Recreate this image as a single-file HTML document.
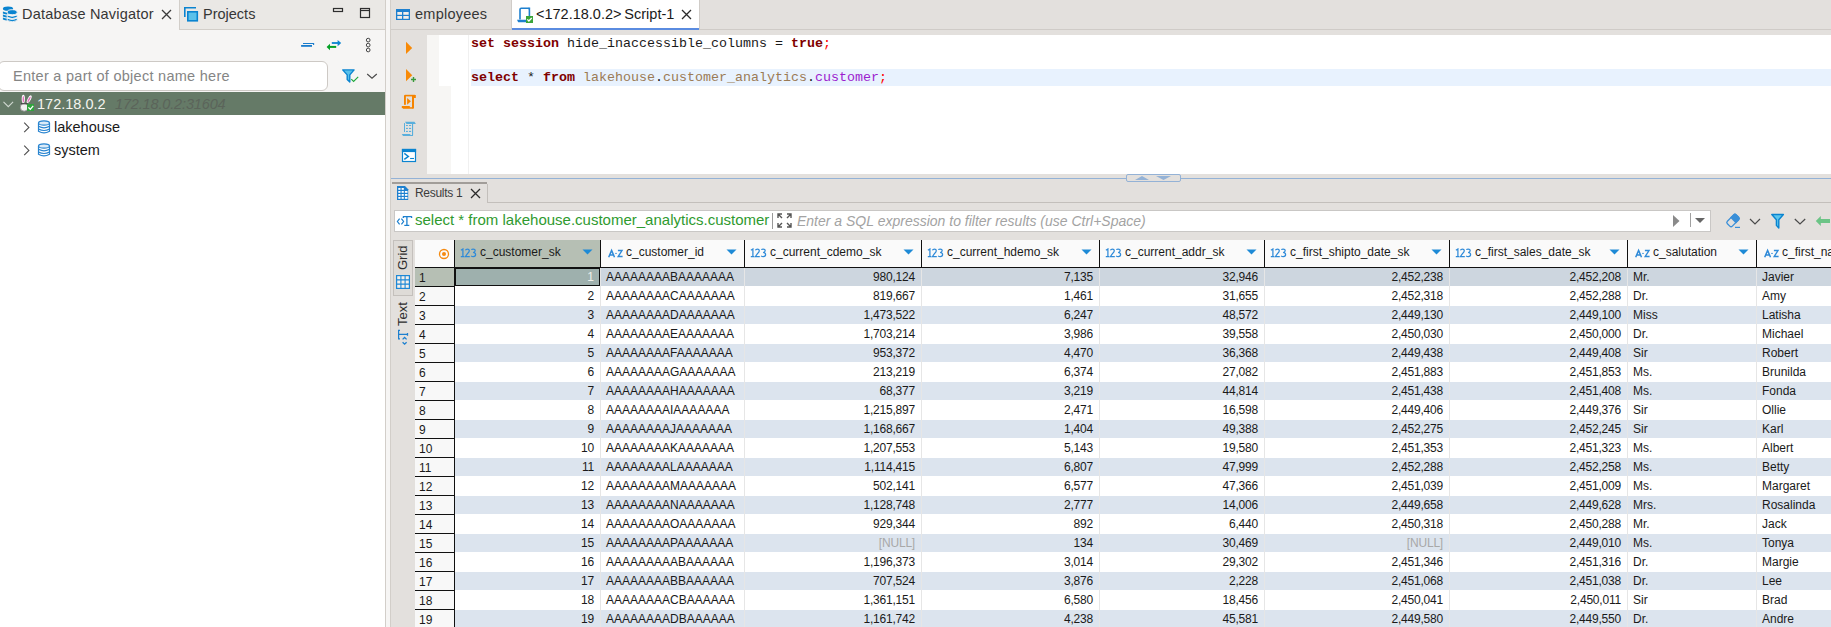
<!DOCTYPE html>
<html><head><meta charset="utf-8"><style>
html,body{margin:0;padding:0;width:1831px;height:627px;overflow:hidden;background:#e3e0dd}
body{position:relative;font-family:"Liberation Sans",sans-serif}
body>div,body>svg{position:absolute}
.t{white-space:pre;line-height:1}
</style></head><body>
<div style="left:0px;top:0px;width:385px;height:627px;background:#ffffff;"></div>
<div style="left:0px;top:0px;width:385px;height:92px;background:#f6f5f4;"></div>
<div style="left:179px;top:0px;width:206px;height:29px;background:#eae8e5;border-left:1px solid #d2cec9;border-bottom:1px solid #d2cec9;box-sizing:border-box;height:30px;width:206px"></div>
<svg style="left:0px;top:0px" width="20" height="24" viewBox="0 0 20 24"><g fill="#0a84d0">
<ellipse cx="8" cy="8.7" rx="5.1" ry="2.1"/>
<path d="M2.9 11.6 q2 1 4.5 1.2 v1.8 q-2.5 -0.2 -4.5 -1.2z"/>
<path d="M2.9 14.6 q2 1 4.5 1.2 v1.8 q-2.5 -0.2 -4.5 -1.2z"/>
<path d="M2.9 17.6 q2 1 4.5 1.2 v1.8 q-2.5 -0.2 -4.5 -1.2z"/>
</g>
<g fill="#0a84d0" stroke="#f6f5f4" stroke-width="0.9">
<ellipse cx="12.2" cy="12.2" rx="5" ry="2.5"/>
<path d="M7.2 15 q5 2.6 10 0 v2.3 q-5 2.6 -10 0z"/>
<path d="M7.2 18.2 q5 2.6 10 0 v2.3 q-5 2.6 -10 0z"/>
</g></svg>
<div class="t" style="left:22px;top:7px;font-size:14.5px;color:#363636;letter-spacing:0.2px">Database Navigator</div>
<svg style="left:161px;top:9px" width="11" height="11" viewBox="0 0 11 11"><path d="M1 1L10 10M10 1L1 10" stroke="#3a3a3a" stroke-width="1.3"/></svg>
<svg style="left:183px;top:5px" width="16" height="17" viewBox="0 0 16 17"><path d="M1.8 12V2.8H13" stroke="#0a84d0" stroke-width="1.6" fill="none"/><rect x="4.8" y="6.8" width="9.5" height="9" fill="#5bc1ea" stroke="#0a84d0" stroke-width="1.6"/></svg>
<div class="t" style="left:203px;top:7px;font-size:14.5px;color:#363636;">Projects</div>
<svg style="left:332px;top:7px" width="13" height="6" viewBox="0 0 13 6"><rect x="1.5" y="1.5" width="9" height="3" fill="none" stroke="#2e2e2e" stroke-width="1.2"/></svg>
<svg style="left:359px;top:7px" width="13" height="13" viewBox="0 0 13 13"><rect x="1.5" y="1.5" width="9" height="9" fill="none" stroke="#2e2e2e" stroke-width="1.2"/><path d="M1.5 3.5h9" stroke="#2e2e2e" stroke-width="1.2"/></svg>
<svg style="left:296px;top:34px" width="50" height="22" viewBox="0 0 50 22"><path d="M7 9.5H17.6V11" stroke="#1a7ccc" stroke-width="1.1" fill="none"/><rect x="5.1" y="11" width="10.9" height="1.8" fill="#1a7ccc"/><path d="M35.8 9H42.5" stroke="#0a84d0" stroke-width="1.8"/><path d="M41.6 5.9L45.2 9L41.6 12.2z" fill="#0a84d0"/><path d="M40.2 12.9H33" stroke="#03a025" stroke-width="2"/><path d="M34 9.7L30.6 12.9L34 16.2z" fill="#03a025"/></svg>
<svg style="left:364px;top:37px" width="9" height="17" viewBox="0 0 9 17"><g fill="none" stroke="#444" stroke-width="1"><circle cx="4.2" cy="3.1" r="1.85"/><circle cx="4.2" cy="8.1" r="1.85"/><circle cx="4.2" cy="13" r="1.85"/></g></svg>
<div style="left:-2px;top:61px;width:330px;height:30px;background:#fff;border:1px solid #cdc9c5;border-radius:6px;box-sizing:border-box"></div>
<div class="t" style="left:13px;top:69px;font-size:14.5px;color:#858585;letter-spacing:0.28px">Enter a part of object name here</div>
<svg style="left:341px;top:69px" width="19" height="15" viewBox="0 0 19 15"><path d="M1.7 0.9h11.4l-4.3 5v7.2l-2.6-2.6v-4.6z" fill="#58c0ea" stroke="#0a84d0" stroke-width="1.4" stroke-linejoin="round"/><path d="M10.3 10.2l2.3 2.3 4.6-4.6" stroke="#1ea83a" stroke-width="1.1" fill="none"/></svg>
<svg style="left:366px;top:72px" width="12" height="8" viewBox="0 0 12 8"><path d="M1.2 2l4.8 4.3 4.8-4.3" stroke="#4a4a4a" stroke-width="1.15" fill="none"/></svg>
<div style="left:0px;top:92px;width:385px;height:23px;background:#657a67;"></div>
<svg style="left:2px;top:100px" width="13" height="9" viewBox="0 0 13 9"><path d="M1.5 1.8l4.8 4.8 4.8-4.8" stroke="#d0d8d0" stroke-width="1.1" fill="none"/></svg>
<svg style="left:19px;top:94px" width="17" height="18" viewBox="0 0 17 18"><ellipse cx="4.3" cy="5" rx="1.6" ry="4.2" fill="#fff"/><ellipse cx="4.3" cy="5.3" rx="0.75" ry="3.2" fill="#e46bbd"/>
<g transform="rotate(28 10.2 5.2)"><ellipse cx="10.2" cy="5.2" rx="1.6" ry="4.2" fill="#fff"/><ellipse cx="10.2" cy="5.5" rx="0.75" ry="3.2" fill="#e46bbd"/></g>
<ellipse cx="5.2" cy="13.2" rx="3.9" ry="4" fill="#f2f2f2" stroke="#8a8a8a" stroke-width="0.8"/><path d="M2 9.8h6.5" stroke="#333" stroke-width="1"/><rect x="8" y="10" width="7" height="7" fill="#2fa33c"/><path d="M9.4 13.4l1.9 1.9 2.9-3.4" stroke="#fff" stroke-width="1.3" fill="none"/></svg>
<div class="t" style="left:37px;top:97px;font-size:14.5px;color:#f4f4ee;">172.18.0.2</div>
<div class="t" style="left:115px;top:97px;font-size:14.5px;color:#5b645a;font-style:italic;letter-spacing:-0.15px">172.18.0.2:31604</div>
<svg style="left:22px;top:121px" width="9" height="12" viewBox="0 0 9 12"><path d="M2.2 1.6l4.7 4.8-4.7 4.8" stroke="#505050" stroke-width="1.1" fill="none"/></svg>
<svg style="left:37px;top:120px" width="14" height="14" viewBox="0 0 14 14"><ellipse cx="7" cy="3" rx="5.5" ry="2.2" fill="#dcebf7"/><g fill="none" stroke="#2a85d0" stroke-width="1.2"><ellipse cx="7" cy="3" rx="5.5" ry="2.2"/><path d="M1.5 3v8.3q5.5 3.2 11 0v-8.3"/><path d="M1.5 6.3q5.5 3 11 0M1.5 9q5.5 3 11 0"/></g></svg>
<div class="t" style="left:54px;top:120px;font-size:14.5px;color:#1a1a1a;">lakehouse</div>
<svg style="left:22px;top:144px" width="9" height="12" viewBox="0 0 9 12"><path d="M2.2 1.6l4.7 4.8-4.7 4.8" stroke="#505050" stroke-width="1.1" fill="none"/></svg>
<svg style="left:37px;top:143px" width="14" height="14" viewBox="0 0 14 14"><ellipse cx="7" cy="3" rx="5.5" ry="2.2" fill="#dcebf7"/><g fill="none" stroke="#2a85d0" stroke-width="1.2"><ellipse cx="7" cy="3" rx="5.5" ry="2.2"/><path d="M1.5 3v8.3q5.5 3.2 11 0v-8.3"/><path d="M1.5 6.3q5.5 3 11 0M1.5 9q5.5 3 11 0"/></g></svg>
<div class="t" style="left:54px;top:143px;font-size:14.5px;color:#1a1a1a;">system</div>
<div style="left:385px;top:0px;width:1px;height:627px;background:#d2cec9;"></div>
<div style="left:386px;top:0px;width:4px;height:627px;background:#f6f5f4;"></div>
<div style="left:390px;top:0px;width:1px;height:627px;background:#d2cec9;"></div>
<div style="left:391px;top:0px;width:1440px;height:627px;background:#e3e0dd;"></div>
<div style="left:391px;top:29px;width:1440px;height:1px;background:#cfcbc7;"></div>
<svg style="left:395px;top:8px" width="16" height="13" viewBox="0 0 16 13"><rect x="1" y="1" width="14" height="11" fill="#1e80cf"/><g fill="#f4eee8"><rect x="2.3" y="4" width="4.7" height="2.8"/><rect x="8.3" y="4" width="5.4" height="2.8"/><rect x="2.3" y="8" width="4.7" height="2.8"/><rect x="8.3" y="8" width="5.4" height="2.8"/></g></svg>
<div class="t" style="left:415px;top:7px;font-size:14.5px;color:#363636;letter-spacing:0.25px">employees</div>
<div style="left:511px;top:0px;width:1px;height:30px;background:#d0ccc8;"></div>
<div style="left:512px;top:0px;width:187px;height:28px;background:#ffffff;"></div>
<div style="left:512px;top:28px;width:187px;height:2px;background:#5a8be0;"></div>
<div style="left:699px;top:0px;width:1px;height:29px;background:#d0ccc8;"></div>
<svg style="left:516px;top:7px" width="19" height="17" viewBox="0 0 19 17"><path d="M4 12.5V2.5q0-1.2 1.2-1.2h7q1.2 0 1.2 1.2V12" fill="none" stroke="#1e80cf" stroke-width="1.6"/><path d="M12.4 1.3h1.8" stroke="#1e80cf" stroke-width="1.6"/><path d="M1 12.8h11v2.4H2.2z" fill="#1e80cf"/><rect x="10" y="9" width="7" height="7" fill="#3aa53a"/><path d="M11.3 12.4l1.6 1.6 2.8-3" stroke="#fff" stroke-width="1.3" fill="none"/></svg>
<div class="t" style="left:536px;top:7px;font-size:14.5px;color:#1a1a1a;">&lt;172.18.0.2&gt;&#8201;Script-1</div>
<svg style="left:681px;top:9px" width="11" height="11" viewBox="0 0 11 11"><path d="M1 1L10 10M10 1L1 10" stroke="#2a2a2a" stroke-width="1.3"/></svg>
<div style="left:427px;top:35px;width:1404px;height:139px;background:#ffffff;"></div>
<div style="left:427px;top:35px;width:12px;height:51px;background:#f7f6f4;"></div>
<div style="left:427px;top:86px;width:24px;height:88px;background:#f7f6f4;"></div>
<div style="left:468px;top:35px;width:1px;height:139px;background:#f0f0f0;"></div>
<div style="left:471px;top:69px;width:1360px;height:17px;background:#e8f2fe;"></div>
<svg style="left:404px;top:41px" width="10" height="14" viewBox="0 0 10 14"><path d="M2 0.8L8.2 7L2 13.1z" fill="#f88a07"/></svg>
<svg style="left:404px;top:68px" width="14" height="15" viewBox="0 0 14 15"><path d="M2 1L8.2 7.2L2 13.3z" fill="#f88a07"/><path d="M7 11.5h5M9.5 9v5" stroke="#3a9a3a" stroke-width="1.4"/></svg>
<svg style="left:398px;top:92px" width="22" height="20" viewBox="0 0 22 20"><g fill="#f58400"><rect x="6" y="3.2" width="1.9" height="9.6"/><rect x="6.8" y="2.8" width="10.3" height="1.6"/><rect x="15.8" y="3" width="2" height="3"/><rect x="14" y="3.8" width="2" height="12.5"/><rect x="3.8" y="14" width="8" height="2.2"/><rect x="5" y="15.2" width="10.5" height="1.5"/><path d="M9.1 5.9L12.9 9.3L9.1 12.8z"/></g></svg>
<svg style="left:398px;top:118px" width="22" height="20" viewBox="0 0 22 20"><g fill="#5aafdc"><rect x="6" y="5.1" width="1" height="8.9"/><path d="M7 3.8h9.5l1.4 2.1H8.5z"/><rect x="14" y="4.8" width="1.1" height="12.4"/><path d="M3.8 16h8l1 1h2.2v0.9H5z"/><rect x="8" y="7" width="1.9" height="1"/><rect x="11" y="7" width="2.1" height="1"/><rect x="8" y="9.9" width="1.9" height="1.1"/><rect x="11" y="9.9" width="2.1" height="1.1"/><rect x="8" y="12.9" width="1.9" height="1.1"/><rect x="11" y="12.9" width="2.1" height="1.1"/></g></svg>
<svg style="left:398px;top:144px" width="22" height="22" viewBox="0 0 22 22"><rect x="4.5" y="5.5" width="13" height="12" fill="#fff" stroke="#0b84d0" stroke-width="1.2"/><rect x="3.9" y="4.9" width="14.2" height="3.2" fill="#0b84d0"/><path d="M6.3 9.4l4.1 3-4.1 3" stroke="#0b84d0" stroke-width="1.4" fill="none"/><path d="M12.1 14.5h3.9" stroke="#0b84d0" stroke-width="1.1"/></svg>
<div class="t" style="left:471px;top:37px;font-size:13.33px;color:#1a1a1a;font-family:'Liberation Mono'"><span style="color:#7f0000;font-weight:bold">set</span> <span style="color:#7f0000;font-weight:bold">session</span> hide_inaccessible_columns = <span style="color:#7f0000;font-weight:bold">true</span><span style="color:#f00">;</span></div>
<div class="t" style="left:471px;top:71px;font-size:13.33px;color:#1a1a1a;font-family:'Liberation Mono'"><span style="color:#7f0000;font-weight:bold">select</span> * <span style="color:#7f0000;font-weight:bold">from</span> <span style="color:#9b7b55">lakehouse</span>.<span style="color:#9b7b55">customer_analytics</span>.<span style="color:#9c1ecf">customer</span><span style="color:#f00">;</span></div>
<div style="left:391px;top:178px;width:1440px;height:1px;background:#94b2d6;"></div>
<div style="left:1126px;top:174px;width:55px;height:8px;border:1px solid #94b2d6;border-radius:2px;box-sizing:border-box;background:#e3e0dd"></div>
<svg style="left:1134px;top:175px" width="40" height="6" viewBox="0 0 40 6"><path d="M1 5l7-4 7 4z" fill="#94b2d6"/><path d="M22 1h15l-7.5 4z" fill="#94b2d6"/></svg>
<div style="left:392px;top:182px;width:95px;height:2px;background:#a19d99;"></div>
<div style="left:487px;top:184px;width:1px;height:19px;background:#c3bfbb;"></div>
<div style="left:487px;top:202px;width:1344px;height:1px;background:#c3bfbb;"></div>
<svg style="left:396px;top:185px" width="14" height="16" viewBox="0 0 14 16"><path d="M1 1h8l3.2 3.2V15H1z" fill="#1e80cf"/><g fill="#fff"><rect x="2.3" y="3" width="2.2" height="1.8"/><rect x="5.6" y="3" width="2.2" height="1.8"/><rect x="2.3" y="6" width="2.2" height="1.8"/><rect x="5.6" y="6" width="2.2" height="1.8"/><rect x="8.9" y="6" width="2.6" height="1.8"/><rect x="2.3" y="9" width="2.2" height="1.8"/><rect x="5.6" y="9" width="2.2" height="1.8"/><rect x="8.9" y="9" width="2.6" height="1.8"/><rect x="2.3" y="12" width="2.2" height="1.8"/><rect x="5.6" y="12" width="2.2" height="1.8"/><rect x="8.9" y="12" width="2.6" height="1.8"/></g></svg>
<div class="t" style="left:415px;top:187px;font-size:12px;color:#3c3c3c;letter-spacing:-0.3px">Results 1</div>
<svg style="left:470px;top:188px" width="11" height="11" viewBox="0 0 11 11"><path d="M1 1L10 10M10 1L1 10" stroke="#2a2a2a" stroke-width="1.3"/></svg>
<div style="left:394px;top:210px;width:1317px;height:22px;background:#fff;border:1px solid #c9c7c5;box-sizing:border-box"></div>
<svg style="left:396px;top:213px" width="18" height="16" viewBox="0 0 18 16"><g stroke="#1b7fce" fill="none"><path d="M3.6 5.6L1.4 8.5L3.6 11.4M5.4 5.6L7.6 8.5L5.4 11.4" stroke-width="1.2"/><path d="M7 3.6H15.9M7.3 3.4V5M15.6 3.4V5" stroke-width="1.3"/><path d="M10.9 3.6V12.3" stroke-width="1.3"/><path d="M8.3 12.4H13.3" stroke-width="1.2"/></g></svg>
<div class="t" style="left:415px;top:212px;font-size:15px;color:#2f9a2f;">select * from lakehouse.customer_analytics.customer</div>
<div style="left:772px;top:213px;width:1px;height:16px;background:#9a9a9a;"></div>
<svg style="left:776px;top:212px" width="17" height="17" viewBox="0 0 17 17"><g stroke="#555" stroke-width="1.4" fill="none"><path d="M2 6V2h4M2 2l4 4M15 6V2h-4M15 2l-4 4M2 11v4h4M2 15l4-4M15 11v4h-4M15 15l-4-4"/></g></svg>
<div class="t" style="left:797px;top:214px;font-size:14px;color:#a3a3a3;font-style:italic">Enter a SQL expression to filter results (use Ctrl+Space)</div>
<svg style="left:1672px;top:214px" width="9" height="14" viewBox="0 0 9 14"><path d="M1 1l6.5 6-6.5 6z" fill="#8a8a8a"/></svg>
<div style="left:1690px;top:213px;width:1px;height:14px;background:#a0a0a0;"></div>
<svg style="left:1694px;top:217px" width="12" height="7" viewBox="0 0 12 7"><path d="M1 1h10l-5 5z" fill="#666"/></svg>
<svg style="left:1724px;top:212px" width="20" height="18" viewBox="0 0 20 18"><g transform="rotate(-45 9 8.5)"><rect x="2.75" y="5" width="12.5" height="7" rx="1.8" fill="none" stroke="#3a8fd8" stroke-width="1.3"/><path d="M9 4.35H13.4a2.5 2.5 0 0 1 2.5 2.5V10.15a2.5 2.5 0 0 1 -2.5 2.5H9z" fill="#3a8fd8"/></g><path d="M11 15.4H16" stroke="#3a8fd8" stroke-width="1.2"/></svg>
<svg style="left:1748px;top:217px" width="14" height="9" viewBox="0 0 14 9"><path d="M2 2l5 5 5-5" stroke="#4a4a4a" stroke-width="1.2" fill="none"/></svg>
<svg style="left:1770px;top:213px" width="16" height="17" viewBox="0 0 16 17"><path d="M1.8 1.5h11.6l-4.6 5.2v8.3l-2.4-2.6v-5.7z" fill="#5bc6ee" stroke="#0a84d0" stroke-width="1.4" stroke-linejoin="round"/></svg>
<svg style="left:1793px;top:217px" width="14" height="9" viewBox="0 0 14 9"><path d="M1.8 2l5.2 5 5.2-5" stroke="#4a4a4a" stroke-width="1.2" fill="none"/></svg>
<svg style="left:1815px;top:215px" width="16" height="12" viewBox="0 0 16 12"><path d="M5.8 1L0.8 6l5 5V8h9.2V4H5.8z" fill="#6cc486"/></svg>
<div style="left:393px;top:240px;width:20px;height:56px;background:#dedbd7;border:1px solid #c4c0bc;box-sizing:border-box"></div>
<div class="t" style="left:396px;top:270px;font-size:13px;color:#2e2e2e;transform:rotate(-90deg);transform-origin:0 0;">Grid</div>
<svg style="left:396px;top:275px" width="14" height="14" viewBox="0 0 14 14"><rect x="0.6" y="0.6" width="12.8" height="12.8" fill="#f6f0ea" stroke="#1e88d6" stroke-width="1.2"/><path d="M0.6 4.9h12.8M0.6 9.1h12.8M4.9 0.6v12.8M9.1 0.6v12.8" stroke="#1e88d6" stroke-width="1.1"/></svg>
<div class="t" style="left:396px;top:326px;font-size:13px;color:#2e2e2e;transform:rotate(-90deg);transform-origin:0 0;">Text</div>
<svg style="left:396px;top:328px" width="14" height="20" viewBox="0 0 14 20"><g stroke="#1e80cf" fill="none"><path d="M4 2.4H2.6v8.4H4" stroke-width="1.2"/><path d="M2.8 6.4h9M11.5 5v2.8" stroke-width="1.3"/><path d="M6.6 11.4l2-1.9 2 1.9M6.6 14.2l2 2 2-2" stroke-width="1.3"/></g></svg>
<div style="left:415px;top:240px;width:1416px;height:387px;background:#ffffff;"></div>
<div style="left:415px;top:240px;width:1416px;height:27px;background:#fafafa;"></div>
<div style="left:455px;top:240px;width:145px;height:27px;background:#b6bfb4;"></div>
<div style="left:415px;top:267px;width:1416px;height:1px;background:#111;"></div>
<div style="left:415px;top:268px;width:39px;height:359px;background:#f8f8f8;"></div>
<svg style="left:437px;top:247px" width="14" height="14" viewBox="0 0 14 14"><circle cx="7" cy="7" r="4.5" fill="none" stroke="#f58a10" stroke-width="1.3"/><circle cx="7" cy="7" r="2" fill="#f58a10"/></svg>
<svg style="left:460px;top:248px" width="18" height="10" viewBox="0 0 18 10"><g fill="none" stroke="#2f8ad8" stroke-width="1.25"><path d="M0.9 2.3L2.9 1V8.7M0.8 8.6H4.4"/><path d="M5.4 2.3Q6 1 7.4 1Q9.3 1 9.3 2.7Q9.3 4 7.6 5.4L5.5 8.5H9.8"/><path d="M11.3 1.6Q12 1 13.2 1Q15.2 1 15.2 2.6Q15.2 4.3 13.1 4.5Q15.6 4.7 15.6 6.6Q15.6 8.6 13.3 8.6Q11.9 8.6 11.1 7.9"/></g></svg>
<div class="t" style="left:480px;top:246px;font-size:12px;color:#1a1a1a;">c_customer_sk</div>
<svg style="left:582px;top:249px" width="12" height="7" viewBox="0 0 12 7"><path d="M0.5 0.5h10l-5 5z" fill="#1e8ad6"/></svg>
<div style="left:600px;top:240px;width:1px;height:27px;background:#111;"></div>
<svg style="left:607px;top:248px" width="18" height="10" viewBox="0 0 18 10"><g fill="none" stroke="#2f8ad8"><path d="M1.7 9.2L4.6 2.4L7.5 9.2M2.8 7H6.4" stroke-width="1.5"/><path d="M10.9 2.5H15L11.2 8.5H15.6" stroke-width="1.4"/></g><rect x="8.3" y="4.9" width="1.4" height="1.1" fill="#2f8ad8"/></svg>
<div class="t" style="left:626px;top:246px;font-size:12px;color:#1a1a1a;">c_customer_id</div>
<svg style="left:726px;top:249px" width="12" height="7" viewBox="0 0 12 7"><path d="M0.5 0.5h10l-5 5z" fill="#1e8ad6"/></svg>
<div style="left:744px;top:240px;width:1px;height:27px;background:#111;"></div>
<svg style="left:750px;top:248px" width="18" height="10" viewBox="0 0 18 10"><g fill="none" stroke="#2f8ad8" stroke-width="1.25"><path d="M0.9 2.3L2.9 1V8.7M0.8 8.6H4.4"/><path d="M5.4 2.3Q6 1 7.4 1Q9.3 1 9.3 2.7Q9.3 4 7.6 5.4L5.5 8.5H9.8"/><path d="M11.3 1.6Q12 1 13.2 1Q15.2 1 15.2 2.6Q15.2 4.3 13.1 4.5Q15.6 4.7 15.6 6.6Q15.6 8.6 13.3 8.6Q11.9 8.6 11.1 7.9"/></g></svg>
<div class="t" style="left:770px;top:246px;font-size:12px;color:#1a1a1a;">c_current_cdemo_sk</div>
<svg style="left:903px;top:249px" width="12" height="7" viewBox="0 0 12 7"><path d="M0.5 0.5h10l-5 5z" fill="#1e8ad6"/></svg>
<div style="left:921px;top:240px;width:1px;height:27px;background:#111;"></div>
<svg style="left:927px;top:248px" width="18" height="10" viewBox="0 0 18 10"><g fill="none" stroke="#2f8ad8" stroke-width="1.25"><path d="M0.9 2.3L2.9 1V8.7M0.8 8.6H4.4"/><path d="M5.4 2.3Q6 1 7.4 1Q9.3 1 9.3 2.7Q9.3 4 7.6 5.4L5.5 8.5H9.8"/><path d="M11.3 1.6Q12 1 13.2 1Q15.2 1 15.2 2.6Q15.2 4.3 13.1 4.5Q15.6 4.7 15.6 6.6Q15.6 8.6 13.3 8.6Q11.9 8.6 11.1 7.9"/></g></svg>
<div class="t" style="left:947px;top:246px;font-size:12px;color:#1a1a1a;">c_current_hdemo_sk</div>
<svg style="left:1081px;top:249px" width="12" height="7" viewBox="0 0 12 7"><path d="M0.5 0.5h10l-5 5z" fill="#1e8ad6"/></svg>
<div style="left:1099px;top:240px;width:1px;height:27px;background:#111;"></div>
<svg style="left:1105px;top:248px" width="18" height="10" viewBox="0 0 18 10"><g fill="none" stroke="#2f8ad8" stroke-width="1.25"><path d="M0.9 2.3L2.9 1V8.7M0.8 8.6H4.4"/><path d="M5.4 2.3Q6 1 7.4 1Q9.3 1 9.3 2.7Q9.3 4 7.6 5.4L5.5 8.5H9.8"/><path d="M11.3 1.6Q12 1 13.2 1Q15.2 1 15.2 2.6Q15.2 4.3 13.1 4.5Q15.6 4.7 15.6 6.6Q15.6 8.6 13.3 8.6Q11.9 8.6 11.1 7.9"/></g></svg>
<div class="t" style="left:1125px;top:246px;font-size:12px;color:#1a1a1a;">c_current_addr_sk</div>
<svg style="left:1246px;top:249px" width="12" height="7" viewBox="0 0 12 7"><path d="M0.5 0.5h10l-5 5z" fill="#1e8ad6"/></svg>
<div style="left:1264px;top:240px;width:1px;height:27px;background:#111;"></div>
<svg style="left:1270px;top:248px" width="18" height="10" viewBox="0 0 18 10"><g fill="none" stroke="#2f8ad8" stroke-width="1.25"><path d="M0.9 2.3L2.9 1V8.7M0.8 8.6H4.4"/><path d="M5.4 2.3Q6 1 7.4 1Q9.3 1 9.3 2.7Q9.3 4 7.6 5.4L5.5 8.5H9.8"/><path d="M11.3 1.6Q12 1 13.2 1Q15.2 1 15.2 2.6Q15.2 4.3 13.1 4.5Q15.6 4.7 15.6 6.6Q15.6 8.6 13.3 8.6Q11.9 8.6 11.1 7.9"/></g></svg>
<div class="t" style="left:1290px;top:246px;font-size:12px;color:#1a1a1a;">c_first_shipto_date_sk</div>
<svg style="left:1431px;top:249px" width="12" height="7" viewBox="0 0 12 7"><path d="M0.5 0.5h10l-5 5z" fill="#1e8ad6"/></svg>
<div style="left:1449px;top:240px;width:1px;height:27px;background:#111;"></div>
<svg style="left:1455px;top:248px" width="18" height="10" viewBox="0 0 18 10"><g fill="none" stroke="#2f8ad8" stroke-width="1.25"><path d="M0.9 2.3L2.9 1V8.7M0.8 8.6H4.4"/><path d="M5.4 2.3Q6 1 7.4 1Q9.3 1 9.3 2.7Q9.3 4 7.6 5.4L5.5 8.5H9.8"/><path d="M11.3 1.6Q12 1 13.2 1Q15.2 1 15.2 2.6Q15.2 4.3 13.1 4.5Q15.6 4.7 15.6 6.6Q15.6 8.6 13.3 8.6Q11.9 8.6 11.1 7.9"/></g></svg>
<div class="t" style="left:1475px;top:246px;font-size:12px;color:#1a1a1a;">c_first_sales_date_sk</div>
<svg style="left:1609px;top:249px" width="12" height="7" viewBox="0 0 12 7"><path d="M0.5 0.5h10l-5 5z" fill="#1e8ad6"/></svg>
<div style="left:1627px;top:240px;width:1px;height:27px;background:#111;"></div>
<svg style="left:1634px;top:248px" width="18" height="10" viewBox="0 0 18 10"><g fill="none" stroke="#2f8ad8"><path d="M1.7 9.2L4.6 2.4L7.5 9.2M2.8 7H6.4" stroke-width="1.5"/><path d="M10.9 2.5H15L11.2 8.5H15.6" stroke-width="1.4"/></g><rect x="8.3" y="4.9" width="1.4" height="1.1" fill="#2f8ad8"/></svg>
<div class="t" style="left:1653px;top:246px;font-size:12px;color:#1a1a1a;">c_salutation</div>
<svg style="left:1738px;top:249px" width="12" height="7" viewBox="0 0 12 7"><path d="M0.5 0.5h10l-5 5z" fill="#1e8ad6"/></svg>
<div style="left:1756px;top:240px;width:1px;height:27px;background:#111;"></div>
<svg style="left:1763px;top:248px" width="18" height="10" viewBox="0 0 18 10"><g fill="none" stroke="#2f8ad8"><path d="M1.7 9.2L4.6 2.4L7.5 9.2M2.8 7H6.4" stroke-width="1.5"/><path d="M10.9 2.5H15L11.2 8.5H15.6" stroke-width="1.4"/></g><rect x="8.3" y="4.9" width="1.4" height="1.1" fill="#2f8ad8"/></svg>
<div class="t" style="left:1782px;top:246px;font-size:12px;color:#1a1a1a;">c_first_name</div>
<div style="left:455px;top:268px;width:1376px;height:18px;background:#cdd6df;"></div>
<div style="left:415px;top:268px;width:39px;height:18px;background:#b6bfb4;"></div>
<div style="left:415px;top:286px;width:40px;height:1px;background:#111;"></div>
<div class="t" style="left:419px;top:272px;font-size:12px;color:#1a1a1a;">1</div>
<div class="t" style="right:1237px;top:271px;font-size:12px;color:#eef2f0;letter-spacing:-0.2px">1</div>
<div class="t" style="left:606px;top:271px;font-size:12px;color:#1a1a1a;">AAAAAAAABAAAAAAA</div>
<div class="t" style="right:916px;top:271px;font-size:12px;color:#1a1a1a;letter-spacing:-0.2px">980,124</div>
<div class="t" style="right:738px;top:271px;font-size:12px;color:#1a1a1a;letter-spacing:-0.2px">7,135</div>
<div class="t" style="right:573px;top:271px;font-size:12px;color:#1a1a1a;letter-spacing:-0.2px">32,946</div>
<div class="t" style="right:388px;top:271px;font-size:12px;color:#1a1a1a;letter-spacing:-0.2px">2,452,238</div>
<div class="t" style="right:210px;top:271px;font-size:12px;color:#1a1a1a;letter-spacing:-0.2px">2,452,208</div>
<div class="t" style="left:1633px;top:271px;font-size:12px;color:#1a1a1a;">Mr.</div>
<div class="t" style="left:1762px;top:271px;font-size:12px;color:#1a1a1a;">Javier</div>
<div style="left:415px;top:305px;width:40px;height:1px;background:#111;"></div>
<div class="t" style="left:419px;top:291px;font-size:12px;color:#1a1a1a;">2</div>
<div class="t" style="right:1237px;top:290px;font-size:12px;color:#1a1a1a;letter-spacing:-0.2px">2</div>
<div class="t" style="left:606px;top:290px;font-size:12px;color:#1a1a1a;">AAAAAAAACAAAAAAA</div>
<div class="t" style="right:916px;top:290px;font-size:12px;color:#1a1a1a;letter-spacing:-0.2px">819,667</div>
<div class="t" style="right:738px;top:290px;font-size:12px;color:#1a1a1a;letter-spacing:-0.2px">1,461</div>
<div class="t" style="right:573px;top:290px;font-size:12px;color:#1a1a1a;letter-spacing:-0.2px">31,655</div>
<div class="t" style="right:388px;top:290px;font-size:12px;color:#1a1a1a;letter-spacing:-0.2px">2,452,318</div>
<div class="t" style="right:210px;top:290px;font-size:12px;color:#1a1a1a;letter-spacing:-0.2px">2,452,288</div>
<div class="t" style="left:1633px;top:290px;font-size:12px;color:#1a1a1a;">Dr.</div>
<div class="t" style="left:1762px;top:290px;font-size:12px;color:#1a1a1a;">Amy</div>
<div style="left:455px;top:306px;width:1376px;height:18px;background:#dce4ee;"></div>
<div style="left:415px;top:324px;width:40px;height:1px;background:#111;"></div>
<div class="t" style="left:419px;top:310px;font-size:12px;color:#1a1a1a;">3</div>
<div class="t" style="right:1237px;top:309px;font-size:12px;color:#1a1a1a;letter-spacing:-0.2px">3</div>
<div class="t" style="left:606px;top:309px;font-size:12px;color:#1a1a1a;">AAAAAAAADAAAAAAA</div>
<div class="t" style="right:916px;top:309px;font-size:12px;color:#1a1a1a;letter-spacing:-0.2px">1,473,522</div>
<div class="t" style="right:738px;top:309px;font-size:12px;color:#1a1a1a;letter-spacing:-0.2px">6,247</div>
<div class="t" style="right:573px;top:309px;font-size:12px;color:#1a1a1a;letter-spacing:-0.2px">48,572</div>
<div class="t" style="right:388px;top:309px;font-size:12px;color:#1a1a1a;letter-spacing:-0.2px">2,449,130</div>
<div class="t" style="right:210px;top:309px;font-size:12px;color:#1a1a1a;letter-spacing:-0.2px">2,449,100</div>
<div class="t" style="left:1633px;top:309px;font-size:12px;color:#1a1a1a;">Miss</div>
<div class="t" style="left:1762px;top:309px;font-size:12px;color:#1a1a1a;">Latisha</div>
<div style="left:415px;top:343px;width:40px;height:1px;background:#111;"></div>
<div class="t" style="left:419px;top:329px;font-size:12px;color:#1a1a1a;">4</div>
<div class="t" style="right:1237px;top:328px;font-size:12px;color:#1a1a1a;letter-spacing:-0.2px">4</div>
<div class="t" style="left:606px;top:328px;font-size:12px;color:#1a1a1a;">AAAAAAAAEAAAAAAA</div>
<div class="t" style="right:916px;top:328px;font-size:12px;color:#1a1a1a;letter-spacing:-0.2px">1,703,214</div>
<div class="t" style="right:738px;top:328px;font-size:12px;color:#1a1a1a;letter-spacing:-0.2px">3,986</div>
<div class="t" style="right:573px;top:328px;font-size:12px;color:#1a1a1a;letter-spacing:-0.2px">39,558</div>
<div class="t" style="right:388px;top:328px;font-size:12px;color:#1a1a1a;letter-spacing:-0.2px">2,450,030</div>
<div class="t" style="right:210px;top:328px;font-size:12px;color:#1a1a1a;letter-spacing:-0.2px">2,450,000</div>
<div class="t" style="left:1633px;top:328px;font-size:12px;color:#1a1a1a;">Dr.</div>
<div class="t" style="left:1762px;top:328px;font-size:12px;color:#1a1a1a;">Michael</div>
<div style="left:455px;top:344px;width:1376px;height:18px;background:#dce4ee;"></div>
<div style="left:415px;top:362px;width:40px;height:1px;background:#111;"></div>
<div class="t" style="left:419px;top:348px;font-size:12px;color:#1a1a1a;">5</div>
<div class="t" style="right:1237px;top:347px;font-size:12px;color:#1a1a1a;letter-spacing:-0.2px">5</div>
<div class="t" style="left:606px;top:347px;font-size:12px;color:#1a1a1a;">AAAAAAAAFAAAAAAA</div>
<div class="t" style="right:916px;top:347px;font-size:12px;color:#1a1a1a;letter-spacing:-0.2px">953,372</div>
<div class="t" style="right:738px;top:347px;font-size:12px;color:#1a1a1a;letter-spacing:-0.2px">4,470</div>
<div class="t" style="right:573px;top:347px;font-size:12px;color:#1a1a1a;letter-spacing:-0.2px">36,368</div>
<div class="t" style="right:388px;top:347px;font-size:12px;color:#1a1a1a;letter-spacing:-0.2px">2,449,438</div>
<div class="t" style="right:210px;top:347px;font-size:12px;color:#1a1a1a;letter-spacing:-0.2px">2,449,408</div>
<div class="t" style="left:1633px;top:347px;font-size:12px;color:#1a1a1a;">Sir</div>
<div class="t" style="left:1762px;top:347px;font-size:12px;color:#1a1a1a;">Robert</div>
<div style="left:415px;top:381px;width:40px;height:1px;background:#111;"></div>
<div class="t" style="left:419px;top:367px;font-size:12px;color:#1a1a1a;">6</div>
<div class="t" style="right:1237px;top:366px;font-size:12px;color:#1a1a1a;letter-spacing:-0.2px">6</div>
<div class="t" style="left:606px;top:366px;font-size:12px;color:#1a1a1a;">AAAAAAAAGAAAAAAA</div>
<div class="t" style="right:916px;top:366px;font-size:12px;color:#1a1a1a;letter-spacing:-0.2px">213,219</div>
<div class="t" style="right:738px;top:366px;font-size:12px;color:#1a1a1a;letter-spacing:-0.2px">6,374</div>
<div class="t" style="right:573px;top:366px;font-size:12px;color:#1a1a1a;letter-spacing:-0.2px">27,082</div>
<div class="t" style="right:388px;top:366px;font-size:12px;color:#1a1a1a;letter-spacing:-0.2px">2,451,883</div>
<div class="t" style="right:210px;top:366px;font-size:12px;color:#1a1a1a;letter-spacing:-0.2px">2,451,853</div>
<div class="t" style="left:1633px;top:366px;font-size:12px;color:#1a1a1a;">Ms.</div>
<div class="t" style="left:1762px;top:366px;font-size:12px;color:#1a1a1a;">Brunilda</div>
<div style="left:455px;top:382px;width:1376px;height:18px;background:#dce4ee;"></div>
<div style="left:415px;top:400px;width:40px;height:1px;background:#111;"></div>
<div class="t" style="left:419px;top:386px;font-size:12px;color:#1a1a1a;">7</div>
<div class="t" style="right:1237px;top:385px;font-size:12px;color:#1a1a1a;letter-spacing:-0.2px">7</div>
<div class="t" style="left:606px;top:385px;font-size:12px;color:#1a1a1a;">AAAAAAAAHAAAAAAA</div>
<div class="t" style="right:916px;top:385px;font-size:12px;color:#1a1a1a;letter-spacing:-0.2px">68,377</div>
<div class="t" style="right:738px;top:385px;font-size:12px;color:#1a1a1a;letter-spacing:-0.2px">3,219</div>
<div class="t" style="right:573px;top:385px;font-size:12px;color:#1a1a1a;letter-spacing:-0.2px">44,814</div>
<div class="t" style="right:388px;top:385px;font-size:12px;color:#1a1a1a;letter-spacing:-0.2px">2,451,438</div>
<div class="t" style="right:210px;top:385px;font-size:12px;color:#1a1a1a;letter-spacing:-0.2px">2,451,408</div>
<div class="t" style="left:1633px;top:385px;font-size:12px;color:#1a1a1a;">Ms.</div>
<div class="t" style="left:1762px;top:385px;font-size:12px;color:#1a1a1a;">Fonda</div>
<div style="left:415px;top:419px;width:40px;height:1px;background:#111;"></div>
<div class="t" style="left:419px;top:405px;font-size:12px;color:#1a1a1a;">8</div>
<div class="t" style="right:1237px;top:404px;font-size:12px;color:#1a1a1a;letter-spacing:-0.2px">8</div>
<div class="t" style="left:606px;top:404px;font-size:12px;color:#1a1a1a;">AAAAAAAAIAAAAAAA</div>
<div class="t" style="right:916px;top:404px;font-size:12px;color:#1a1a1a;letter-spacing:-0.2px">1,215,897</div>
<div class="t" style="right:738px;top:404px;font-size:12px;color:#1a1a1a;letter-spacing:-0.2px">2,471</div>
<div class="t" style="right:573px;top:404px;font-size:12px;color:#1a1a1a;letter-spacing:-0.2px">16,598</div>
<div class="t" style="right:388px;top:404px;font-size:12px;color:#1a1a1a;letter-spacing:-0.2px">2,449,406</div>
<div class="t" style="right:210px;top:404px;font-size:12px;color:#1a1a1a;letter-spacing:-0.2px">2,449,376</div>
<div class="t" style="left:1633px;top:404px;font-size:12px;color:#1a1a1a;">Sir</div>
<div class="t" style="left:1762px;top:404px;font-size:12px;color:#1a1a1a;">Ollie</div>
<div style="left:455px;top:420px;width:1376px;height:18px;background:#dce4ee;"></div>
<div style="left:415px;top:438px;width:40px;height:1px;background:#111;"></div>
<div class="t" style="left:419px;top:424px;font-size:12px;color:#1a1a1a;">9</div>
<div class="t" style="right:1237px;top:423px;font-size:12px;color:#1a1a1a;letter-spacing:-0.2px">9</div>
<div class="t" style="left:606px;top:423px;font-size:12px;color:#1a1a1a;">AAAAAAAAJAAAAAAA</div>
<div class="t" style="right:916px;top:423px;font-size:12px;color:#1a1a1a;letter-spacing:-0.2px">1,168,667</div>
<div class="t" style="right:738px;top:423px;font-size:12px;color:#1a1a1a;letter-spacing:-0.2px">1,404</div>
<div class="t" style="right:573px;top:423px;font-size:12px;color:#1a1a1a;letter-spacing:-0.2px">49,388</div>
<div class="t" style="right:388px;top:423px;font-size:12px;color:#1a1a1a;letter-spacing:-0.2px">2,452,275</div>
<div class="t" style="right:210px;top:423px;font-size:12px;color:#1a1a1a;letter-spacing:-0.2px">2,452,245</div>
<div class="t" style="left:1633px;top:423px;font-size:12px;color:#1a1a1a;">Sir</div>
<div class="t" style="left:1762px;top:423px;font-size:12px;color:#1a1a1a;">Karl</div>
<div style="left:415px;top:457px;width:40px;height:1px;background:#111;"></div>
<div class="t" style="left:419px;top:443px;font-size:12px;color:#1a1a1a;">10</div>
<div class="t" style="right:1237px;top:442px;font-size:12px;color:#1a1a1a;letter-spacing:-0.2px">10</div>
<div class="t" style="left:606px;top:442px;font-size:12px;color:#1a1a1a;">AAAAAAAAKAAAAAAA</div>
<div class="t" style="right:916px;top:442px;font-size:12px;color:#1a1a1a;letter-spacing:-0.2px">1,207,553</div>
<div class="t" style="right:738px;top:442px;font-size:12px;color:#1a1a1a;letter-spacing:-0.2px">5,143</div>
<div class="t" style="right:573px;top:442px;font-size:12px;color:#1a1a1a;letter-spacing:-0.2px">19,580</div>
<div class="t" style="right:388px;top:442px;font-size:12px;color:#1a1a1a;letter-spacing:-0.2px">2,451,353</div>
<div class="t" style="right:210px;top:442px;font-size:12px;color:#1a1a1a;letter-spacing:-0.2px">2,451,323</div>
<div class="t" style="left:1633px;top:442px;font-size:12px;color:#1a1a1a;">Ms.</div>
<div class="t" style="left:1762px;top:442px;font-size:12px;color:#1a1a1a;">Albert</div>
<div style="left:455px;top:458px;width:1376px;height:18px;background:#dce4ee;"></div>
<div style="left:415px;top:476px;width:40px;height:1px;background:#111;"></div>
<div class="t" style="left:419px;top:462px;font-size:12px;color:#1a1a1a;">11</div>
<div class="t" style="right:1237px;top:461px;font-size:12px;color:#1a1a1a;letter-spacing:-0.2px">11</div>
<div class="t" style="left:606px;top:461px;font-size:12px;color:#1a1a1a;">AAAAAAAALAAAAAAA</div>
<div class="t" style="right:916px;top:461px;font-size:12px;color:#1a1a1a;letter-spacing:-0.2px">1,114,415</div>
<div class="t" style="right:738px;top:461px;font-size:12px;color:#1a1a1a;letter-spacing:-0.2px">6,807</div>
<div class="t" style="right:573px;top:461px;font-size:12px;color:#1a1a1a;letter-spacing:-0.2px">47,999</div>
<div class="t" style="right:388px;top:461px;font-size:12px;color:#1a1a1a;letter-spacing:-0.2px">2,452,288</div>
<div class="t" style="right:210px;top:461px;font-size:12px;color:#1a1a1a;letter-spacing:-0.2px">2,452,258</div>
<div class="t" style="left:1633px;top:461px;font-size:12px;color:#1a1a1a;">Ms.</div>
<div class="t" style="left:1762px;top:461px;font-size:12px;color:#1a1a1a;">Betty</div>
<div style="left:415px;top:495px;width:40px;height:1px;background:#111;"></div>
<div class="t" style="left:419px;top:481px;font-size:12px;color:#1a1a1a;">12</div>
<div class="t" style="right:1237px;top:480px;font-size:12px;color:#1a1a1a;letter-spacing:-0.2px">12</div>
<div class="t" style="left:606px;top:480px;font-size:12px;color:#1a1a1a;">AAAAAAAAMAAAAAAA</div>
<div class="t" style="right:916px;top:480px;font-size:12px;color:#1a1a1a;letter-spacing:-0.2px">502,141</div>
<div class="t" style="right:738px;top:480px;font-size:12px;color:#1a1a1a;letter-spacing:-0.2px">6,577</div>
<div class="t" style="right:573px;top:480px;font-size:12px;color:#1a1a1a;letter-spacing:-0.2px">47,366</div>
<div class="t" style="right:388px;top:480px;font-size:12px;color:#1a1a1a;letter-spacing:-0.2px">2,451,039</div>
<div class="t" style="right:210px;top:480px;font-size:12px;color:#1a1a1a;letter-spacing:-0.2px">2,451,009</div>
<div class="t" style="left:1633px;top:480px;font-size:12px;color:#1a1a1a;">Ms.</div>
<div class="t" style="left:1762px;top:480px;font-size:12px;color:#1a1a1a;">Margaret</div>
<div style="left:455px;top:496px;width:1376px;height:18px;background:#dce4ee;"></div>
<div style="left:415px;top:514px;width:40px;height:1px;background:#111;"></div>
<div class="t" style="left:419px;top:500px;font-size:12px;color:#1a1a1a;">13</div>
<div class="t" style="right:1237px;top:499px;font-size:12px;color:#1a1a1a;letter-spacing:-0.2px">13</div>
<div class="t" style="left:606px;top:499px;font-size:12px;color:#1a1a1a;">AAAAAAAANAAAAAAA</div>
<div class="t" style="right:916px;top:499px;font-size:12px;color:#1a1a1a;letter-spacing:-0.2px">1,128,748</div>
<div class="t" style="right:738px;top:499px;font-size:12px;color:#1a1a1a;letter-spacing:-0.2px">2,777</div>
<div class="t" style="right:573px;top:499px;font-size:12px;color:#1a1a1a;letter-spacing:-0.2px">14,006</div>
<div class="t" style="right:388px;top:499px;font-size:12px;color:#1a1a1a;letter-spacing:-0.2px">2,449,658</div>
<div class="t" style="right:210px;top:499px;font-size:12px;color:#1a1a1a;letter-spacing:-0.2px">2,449,628</div>
<div class="t" style="left:1633px;top:499px;font-size:12px;color:#1a1a1a;">Mrs.</div>
<div class="t" style="left:1762px;top:499px;font-size:12px;color:#1a1a1a;">Rosalinda</div>
<div style="left:415px;top:533px;width:40px;height:1px;background:#111;"></div>
<div class="t" style="left:419px;top:519px;font-size:12px;color:#1a1a1a;">14</div>
<div class="t" style="right:1237px;top:518px;font-size:12px;color:#1a1a1a;letter-spacing:-0.2px">14</div>
<div class="t" style="left:606px;top:518px;font-size:12px;color:#1a1a1a;">AAAAAAAAOAAAAAAA</div>
<div class="t" style="right:916px;top:518px;font-size:12px;color:#1a1a1a;letter-spacing:-0.2px">929,344</div>
<div class="t" style="right:738px;top:518px;font-size:12px;color:#1a1a1a;letter-spacing:-0.2px">892</div>
<div class="t" style="right:573px;top:518px;font-size:12px;color:#1a1a1a;letter-spacing:-0.2px">6,440</div>
<div class="t" style="right:388px;top:518px;font-size:12px;color:#1a1a1a;letter-spacing:-0.2px">2,450,318</div>
<div class="t" style="right:210px;top:518px;font-size:12px;color:#1a1a1a;letter-spacing:-0.2px">2,450,288</div>
<div class="t" style="left:1633px;top:518px;font-size:12px;color:#1a1a1a;">Mr.</div>
<div class="t" style="left:1762px;top:518px;font-size:12px;color:#1a1a1a;">Jack</div>
<div style="left:455px;top:534px;width:1376px;height:18px;background:#dce4ee;"></div>
<div style="left:415px;top:552px;width:40px;height:1px;background:#111;"></div>
<div class="t" style="left:419px;top:538px;font-size:12px;color:#1a1a1a;">15</div>
<div class="t" style="right:1237px;top:537px;font-size:12px;color:#1a1a1a;letter-spacing:-0.2px">15</div>
<div class="t" style="left:606px;top:537px;font-size:12px;color:#1a1a1a;">AAAAAAAAPAAAAAAA</div>
<div class="t" style="right:916px;top:537px;font-size:12px;color:#a8a8a8;letter-spacing:-0.2px">[NULL]</div>
<div class="t" style="right:738px;top:537px;font-size:12px;color:#1a1a1a;letter-spacing:-0.2px">134</div>
<div class="t" style="right:573px;top:537px;font-size:12px;color:#1a1a1a;letter-spacing:-0.2px">30,469</div>
<div class="t" style="right:388px;top:537px;font-size:12px;color:#a8a8a8;letter-spacing:-0.2px">[NULL]</div>
<div class="t" style="right:210px;top:537px;font-size:12px;color:#1a1a1a;letter-spacing:-0.2px">2,449,010</div>
<div class="t" style="left:1633px;top:537px;font-size:12px;color:#1a1a1a;">Ms.</div>
<div class="t" style="left:1762px;top:537px;font-size:12px;color:#1a1a1a;">Tonya</div>
<div style="left:415px;top:571px;width:40px;height:1px;background:#111;"></div>
<div class="t" style="left:419px;top:557px;font-size:12px;color:#1a1a1a;">16</div>
<div class="t" style="right:1237px;top:556px;font-size:12px;color:#1a1a1a;letter-spacing:-0.2px">16</div>
<div class="t" style="left:606px;top:556px;font-size:12px;color:#1a1a1a;">AAAAAAAAABAAAAAA</div>
<div class="t" style="right:916px;top:556px;font-size:12px;color:#1a1a1a;letter-spacing:-0.2px">1,196,373</div>
<div class="t" style="right:738px;top:556px;font-size:12px;color:#1a1a1a;letter-spacing:-0.2px">3,014</div>
<div class="t" style="right:573px;top:556px;font-size:12px;color:#1a1a1a;letter-spacing:-0.2px">29,302</div>
<div class="t" style="right:388px;top:556px;font-size:12px;color:#1a1a1a;letter-spacing:-0.2px">2,451,346</div>
<div class="t" style="right:210px;top:556px;font-size:12px;color:#1a1a1a;letter-spacing:-0.2px">2,451,316</div>
<div class="t" style="left:1633px;top:556px;font-size:12px;color:#1a1a1a;">Dr.</div>
<div class="t" style="left:1762px;top:556px;font-size:12px;color:#1a1a1a;">Margie</div>
<div style="left:455px;top:572px;width:1376px;height:18px;background:#dce4ee;"></div>
<div style="left:415px;top:590px;width:40px;height:1px;background:#111;"></div>
<div class="t" style="left:419px;top:576px;font-size:12px;color:#1a1a1a;">17</div>
<div class="t" style="right:1237px;top:575px;font-size:12px;color:#1a1a1a;letter-spacing:-0.2px">17</div>
<div class="t" style="left:606px;top:575px;font-size:12px;color:#1a1a1a;">AAAAAAAABBAAAAAA</div>
<div class="t" style="right:916px;top:575px;font-size:12px;color:#1a1a1a;letter-spacing:-0.2px">707,524</div>
<div class="t" style="right:738px;top:575px;font-size:12px;color:#1a1a1a;letter-spacing:-0.2px">3,876</div>
<div class="t" style="right:573px;top:575px;font-size:12px;color:#1a1a1a;letter-spacing:-0.2px">2,228</div>
<div class="t" style="right:388px;top:575px;font-size:12px;color:#1a1a1a;letter-spacing:-0.2px">2,451,068</div>
<div class="t" style="right:210px;top:575px;font-size:12px;color:#1a1a1a;letter-spacing:-0.2px">2,451,038</div>
<div class="t" style="left:1633px;top:575px;font-size:12px;color:#1a1a1a;">Dr.</div>
<div class="t" style="left:1762px;top:575px;font-size:12px;color:#1a1a1a;">Lee</div>
<div style="left:415px;top:609px;width:40px;height:1px;background:#111;"></div>
<div class="t" style="left:419px;top:595px;font-size:12px;color:#1a1a1a;">18</div>
<div class="t" style="right:1237px;top:594px;font-size:12px;color:#1a1a1a;letter-spacing:-0.2px">18</div>
<div class="t" style="left:606px;top:594px;font-size:12px;color:#1a1a1a;">AAAAAAAACBAAAAAA</div>
<div class="t" style="right:916px;top:594px;font-size:12px;color:#1a1a1a;letter-spacing:-0.2px">1,361,151</div>
<div class="t" style="right:738px;top:594px;font-size:12px;color:#1a1a1a;letter-spacing:-0.2px">6,580</div>
<div class="t" style="right:573px;top:594px;font-size:12px;color:#1a1a1a;letter-spacing:-0.2px">18,456</div>
<div class="t" style="right:388px;top:594px;font-size:12px;color:#1a1a1a;letter-spacing:-0.2px">2,450,041</div>
<div class="t" style="right:210px;top:594px;font-size:12px;color:#1a1a1a;letter-spacing:-0.2px">2,450,011</div>
<div class="t" style="left:1633px;top:594px;font-size:12px;color:#1a1a1a;">Sir</div>
<div class="t" style="left:1762px;top:594px;font-size:12px;color:#1a1a1a;">Brad</div>
<div style="left:455px;top:610px;width:1376px;height:18px;background:#dce4ee;"></div>
<div style="left:415px;top:628px;width:40px;height:1px;background:#111;"></div>
<div class="t" style="left:419px;top:614px;font-size:12px;color:#1a1a1a;">19</div>
<div class="t" style="right:1237px;top:613px;font-size:12px;color:#1a1a1a;letter-spacing:-0.2px">19</div>
<div class="t" style="left:606px;top:613px;font-size:12px;color:#1a1a1a;">AAAAAAAADBAAAAAA</div>
<div class="t" style="right:916px;top:613px;font-size:12px;color:#1a1a1a;letter-spacing:-0.2px">1,161,742</div>
<div class="t" style="right:738px;top:613px;font-size:12px;color:#1a1a1a;letter-spacing:-0.2px">4,238</div>
<div class="t" style="right:573px;top:613px;font-size:12px;color:#1a1a1a;letter-spacing:-0.2px">45,581</div>
<div class="t" style="right:388px;top:613px;font-size:12px;color:#1a1a1a;letter-spacing:-0.2px">2,449,580</div>
<div class="t" style="right:210px;top:613px;font-size:12px;color:#1a1a1a;letter-spacing:-0.2px">2,449,550</div>
<div class="t" style="left:1633px;top:613px;font-size:12px;color:#1a1a1a;">Dr.</div>
<div class="t" style="left:1762px;top:613px;font-size:12px;color:#1a1a1a;">Andre</div>
<div style="left:454px;top:240px;width:1px;height:387px;background:#111;"></div>
<div style="left:600px;top:268px;width:1px;height:359px;background:#e6e6e6;"></div>
<div style="left:744px;top:268px;width:1px;height:359px;background:#e6e6e6;"></div>
<div style="left:921px;top:268px;width:1px;height:359px;background:#e6e6e6;"></div>
<div style="left:1099px;top:268px;width:1px;height:359px;background:#e6e6e6;"></div>
<div style="left:1264px;top:268px;width:1px;height:359px;background:#e6e6e6;"></div>
<div style="left:1449px;top:268px;width:1px;height:359px;background:#e6e6e6;"></div>
<div style="left:1627px;top:268px;width:1px;height:359px;background:#e6e6e6;"></div>
<div style="left:1756px;top:268px;width:1px;height:359px;background:#e6e6e6;"></div>
<div style="left:455px;top:268px;width:145px;height:18px;border:1px solid #111;box-sizing:border-box;background:#9eb0ad"></div>
<div class="t" style="right:1237px;top:271px;font-size:12px;color:#f0f0ea;">1</div>
</body></html>
